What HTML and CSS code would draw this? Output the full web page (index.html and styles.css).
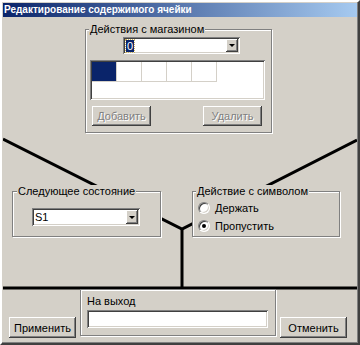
FILE: index.html
```html
<!DOCTYPE html>
<html lang="ru">
<head>
  <meta charset="UTF-8">
  <meta name="viewport" content="width=device-width, initial-scale=1.0">
  <title>Редактирование содержимого ячейки</title>
  <link rel="stylesheet" href="styles.css">
</head>
<body>
  <div class="window">
    <div class="titlebar">Редактирование содержимого ячейки</div>
    <div class="client">
      <svg class="wires" width="354" height="325" viewBox="0 0 354 325">
        <path d="M0 116 L179 206 L354 117" />
        <path d="M179 206 V265" />
        <path d="M0 265 H354" />
      </svg>

      <fieldset class="group shop">
        <legend>Действия с магазином</legend>
        <div class="combo shop-combo">
          <span class="combo-text"><span class="selected">0</span></span>
          <span class="combo-btn"><i class="arrow"></i></span>
        </div>
        <div class="listbox">
          <div class="cells">
            <span class="cell active"></span>
            <span class="cell"></span>
            <span class="cell"></span>
            <span class="cell"></span>
            <span class="cell"></span>
          </div>
        </div>
        <div class="actions">
          <button class="btn small" disabled>Добавить</button>
          <button class="btn small" disabled>Удалить</button>
        </div>
      </fieldset>

      <div class="middle">
        <fieldset class="group next-state">
          <legend>Следующее состояние</legend>
          <div class="combo state-combo">
            <span class="combo-text">S1</span>
            <span class="combo-btn"><i class="arrow"></i></span>
          </div>
        </fieldset>
        <fieldset class="group symbol">
          <legend>Действие с символом</legend>
          <label class="option"><span class="radio"></span>Держать</label>
          <label class="option"><span class="radio checked"></span>Пропустить</label>
        </fieldset>
      </div>

      <div class="bottom">
        <button class="btn">Применить</button>
        <div class="panel output">
          <div class="caption">На выход</div>
          <div class="field"></div>
        </div>
        <button class="btn">Отменить</button>
      </div>
    </div>
  </div>
</body>
</html>
```

FILE: styles.css
```css
body {
  margin: 0;
  background: #d4d0c8;
  font-family: "Liberation Sans", Arial, sans-serif;
  font-size: 11px;
  color: #000;
}
.window {
  width: 360px;
  height: 345px;
  box-sizing: border-box;
  padding: 1px;
  border: 2px solid;
  border-color: #fff #404040 #404040 #fff;
  box-shadow: inset -1px -1px #808080, inset 1px 1px #d4d0c8;
  background: #d4d0c8;
  overflow: hidden;
}
.titlebar {
  height: 14px;
  line-height: 14px;
  padding-left: 1px;
  background: linear-gradient(to right, #0a246a, #a6caf0);
  color: #fff;
  font-weight: bold;
  font-size: 10px;
  white-space: nowrap;
  overflow: hidden;
}
.client {
  position: relative;
  z-index: 0;
  height: 325px;
}
.wires {
  position: absolute;
  left: 0;
  top: 0;
  z-index: -1;
}
.wires path {
  fill: none;
  stroke: #000;
  stroke-width: 3;
}

/* group boxes */
.group {
  margin: 0;
  padding: 0;
  box-sizing: border-box;
  min-width: 0;
  border: 1px solid #808080;
  box-shadow: inset 1px 1px #fff, 1px 1px #fff;
  background: #d4d0c8;
}
.group legend {
  padding: 0 1px;
  margin-left: -1px;
  line-height: 13px;
  background: #d4d0c8;
}
.shop {
  margin: 6px 0 0 82px;
  width: 187px;
  height: 110px;
  padding: 1px 6px 0 4px;
}
.middle {
  display: flex;
  gap: 31px;
  margin-top: 52px;
  padding-left: 9px;
}
.next-state {
  width: 149px;
  height: 52px;
  padding: 10px 0 0 5px;
}
.symbol {
  width: 148px;
  height: 52px;
  padding: 1px 0 0 4px;
}

/* combo boxes */
.combo {
  display: flex;
  box-sizing: border-box;
  padding: 2px;
  background: #fff;
  box-shadow: inset 1px 1px #808080, inset -1px -1px #fff, inset 2px 2px #404040, inset -2px -2px #d4d0c8;
}
.shop-combo {
  width: 117px;
  height: 17px;
  margin-left: 33px;
}
.state-combo {
  width: 108px;
  height: 18px;
  margin-left: 14px;
}
.combo-text {
  flex: 1;
  display: flex;
  align-items: center;
  padding-left: 1px;
  line-height: 12px;
}
.selected {
  background: #0a246a;
  color: #fff;
  padding: 0 1px;
  outline: 1px dotted #c8b060;
}
.combo-btn {
  width: 12px;
  display: flex;
  align-items: center;
  justify-content: center;
  background: #d4d0c8;
  box-shadow: inset -1px -1px #404040, inset 1px 1px #fff, inset -2px -2px #808080;
}
.arrow {
  width: 0;
  height: 0;
  border-left: 3px solid transparent;
  border-right: 3px solid transparent;
  border-top: 3px solid #000;
}

/* list with cells */
.listbox {
  width: 175px;
  height: 40px;
  margin-top: 6px;
  box-sizing: border-box;
  padding: 2px;
  background: #fff;
  box-shadow: inset 1px 1px #808080, inset -1px -1px #fff, inset 2px 2px #404040, inset -2px -2px #d4d0c8;
}
.cells {
  display: flex;
}
.cell {
  width: 24px;
  height: 19px;
  border-right: 1px solid #d4d0c8;
  border-bottom: 1px solid #d4d0c8;
}
.cell.active {
  background: #0a246a;
}
.actions {
  display: flex;
  justify-content: space-between;
  width: 175px;
  box-sizing: border-box;
  padding: 0 3px 0 2px;
  margin-top: 6px;
}

/* buttons */
.btn {
  width: 67px;
  height: 21px;
  padding: 0;
  border: 0;
  background: #d4d0c8;
  font: inherit;
  color: #000;
  box-shadow: inset -1px -1px #404040, inset 1px 1px #fff, inset -2px -2px #808080, inset 2px 2px #d4d0c8;
}
.btn.small {
  width: 59px;
  height: 20px;
}
.btn:disabled {
  color: #808080;
  text-shadow: 1px 1px #fff;
}

/* radios */
.option {
  display: flex;
  align-items: center;
  gap: 5px;
  height: 18px;
  margin-left: 1px;
}
.radio {
  position: relative;
  width: 12px;
  height: 12px;
  box-sizing: border-box;
  border-radius: 50%;
  border: 1px solid;
  border-color: #808080 #fff #fff #808080;
  background: #fff;
  box-shadow: inset 1px 1px #404040, inset -1px -1px #d4d0c8;
}
.radio.checked::after {
  content: "";
  position: absolute;
  left: 3px;
  top: 3px;
  width: 4px;
  height: 4px;
  border-radius: 50%;
  background: #000;
}

/* bottom row */
.bottom {
  display: flex;
  align-items: flex-start;
  gap: 4px;
  margin-top: 52px;
  padding-left: 6px;
}
.bottom .btn {
  margin-top: 28px;
}
.panel {
  width: 196px;
  height: 47px;
  box-sizing: border-box;
  padding: 5px 7px 0 6px;
  border: 1px solid #808080;
  box-shadow: inset 1px 1px #fff, 1px 1px #fff;
}
.caption {
  line-height: 13px;
}
.field {
  height: 18px;
  margin-top: 2px;
  background: #fff;
  box-shadow: inset 1px 1px #808080, inset -1px -1px #fff, inset 2px 2px #404040, inset -2px -2px #d4d0c8;
}
```
